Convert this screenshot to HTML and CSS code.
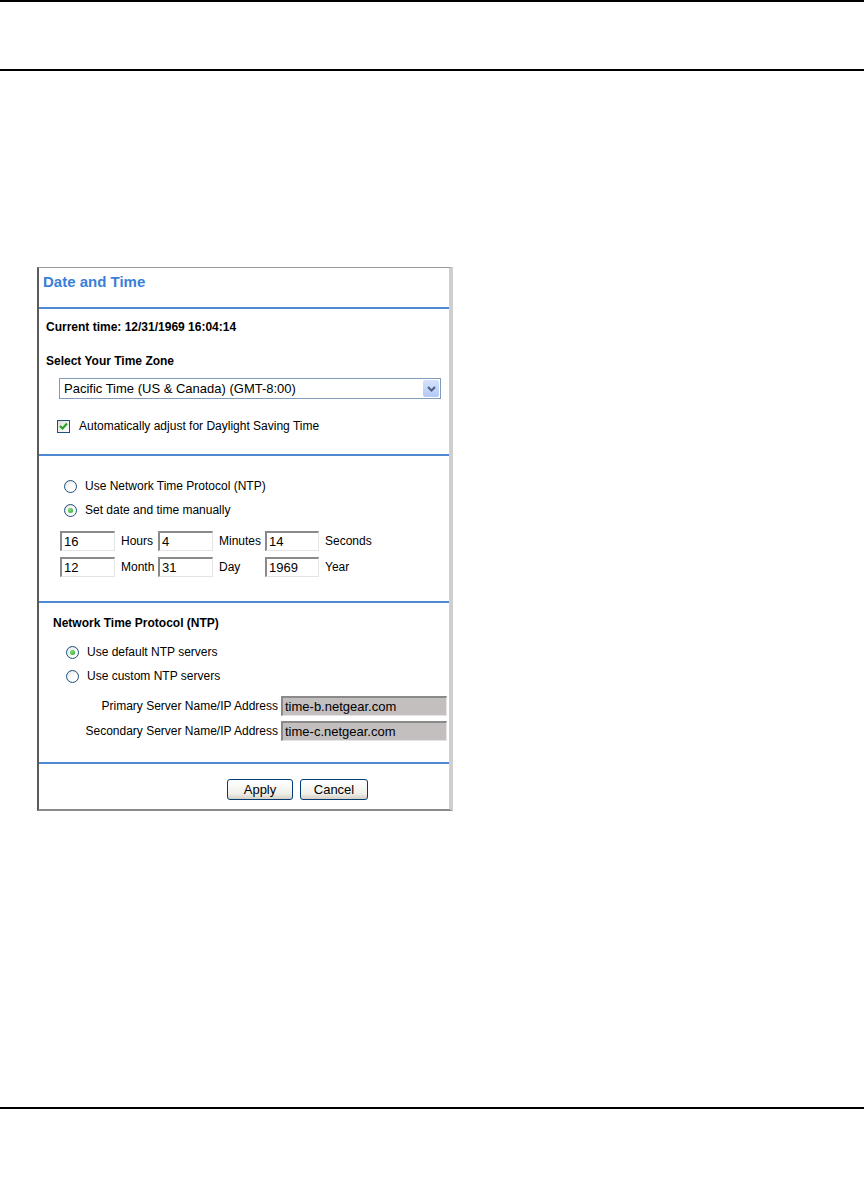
FILE: index.html
```html
<!DOCTYPE html>
<html>
<head>
<meta charset="utf-8">
<link rel="stylesheet" href="styles.css">
</head>
<body>
<div class="page-header"></div>
<div class="content">
  <div class="panel">
    <div class="title">Date and Time</div>
    <div class="sec sec1">
      <div class="bold-line">Current time: 12/31/1969 16:04:14</div>
      <div class="bold-line tz-label">Select Your Time Zone</div>
      <div class="select">
        <span class="select-text">Pacific Time (US &amp; Canada) (GMT-8:00)</span>
        <span class="select-btn">
          <svg width="9" height="6" viewBox="0 0 9 6"><path d="M1 1 L4.5 4.5 L8 1" fill="none" stroke="#4d6185" stroke-width="2"/></svg>
        </span>
      </div>
      <div class="check-row">
        <span class="checkbox">
          <svg width="9" height="8" viewBox="0 0 9 8"><path d="M1 4 L3.5 6.5 L8 1.5" fill="none" stroke="#21a121" stroke-width="2"/></svg>
        </span>
        <span>Automatically adjust for Daylight Saving Time</span>
      </div>
    </div>
    <div class="sec sec2">
      <div class="radio-row"><span class="radio"></span><span>Use Network Time Protocol (NTP)</span></div>
      <div class="radio-row"><span class="radio on"></span><span>Set date and time manually</span></div>
      <div class="time-grid">
        <span class="field">16</span><span class="lbl">Hours</span>
        <span class="field">4</span><span class="lbl">Minutes</span>
        <span class="field">14</span><span class="lbl">Seconds</span>
        <span class="field">12</span><span class="lbl">Month</span>
        <span class="field">31</span><span class="lbl">Day</span>
        <span class="field">1969</span><span class="lbl">Year</span>
      </div>
    </div>
    <div class="sec sec3">
      <div class="bold-line ntp-title">Network Time Protocol (NTP)</div>
      <div class="radio-row r3"><span class="radio on"></span><span>Use default NTP servers</span></div>
      <div class="radio-row r3"><span class="radio"></span><span>Use custom NTP servers</span></div>
      <div class="server-grid">
        <span class="srv-lbl">Primary Server Name/IP Address</span><span class="field gray">time-b.netgear.com</span>
        <span class="srv-lbl">Secondary Server Name/IP Address</span><span class="field gray">time-c.netgear.com</span>
      </div>
    </div>
    <div class="buttons">
      <span class="btn apply">Apply</span>
      <span class="btn cancel">Cancel</span>
    </div>
  </div>
</div>
<div class="page-footer"></div>
</body>
</html>
```
FILE: styles.css
```css
html, body {
  margin: 0;
  padding: 0;
  background: #ffffff;
}
body {
  font-family: "Liberation Sans", Arial, sans-serif;
  font-size: 12px;
  color: #000;
  width: 864px;
  height: 1184px;
}
.page-header {
  height: 67px;
  border-top: 2px solid #000;
  border-bottom: 2px solid #000;
}
.content {
  padding-top: 196px;
  padding-left: 37px;
  height: 1036px;
  box-sizing: border-box;
}
.page-footer {
  border-top: 2px solid #000;
}
.panel {
  width: 416px;
  height: 544px;
  box-sizing: border-box;
  border-left: 2px solid #5a5a5a;
  border-top: 1px solid #9a9a9a;
  border-right: 4px solid #cfcfcf;
  border-bottom: 2px solid #8a8a8a;
  display: flex;
  flex-direction: column;
}
.title {
  height: 41px;
  flex: none;
  box-sizing: border-box;
  padding: 5px 0 0 4px;
  font-size: 15px;
  font-weight: bold;
  line-height: 18px;
  color: #3a7fd8;
  border-bottom: 2px solid #4f88d3;
}
.sec {
  flex: none;
  box-sizing: border-box;
  border-bottom: 2px solid #4f88d3;
}
.sec1 {
  height: 147px;
  padding: 10px 0 0 7px;
}
.bold-line {
  font-weight: bold;
  line-height: 16px;
}
.tz-label {
  margin-top: 18px;
}
.select {
  margin: 9px 0 0 13px;
  width: 382px;
  height: 21px;
  box-sizing: border-box;
  border: 1px solid #7f9db9;
  display: flex;
  align-items: center;
  justify-content: space-between;
  padding-left: 4px;
  font-size: 13px;
}
.select-btn {
  width: 16px;
  height: 17px;
  margin-right: 1px;
  background: linear-gradient(#d6e2fd, #b4c8f6);
  border-radius: 2px;
  display: flex;
  align-items: center;
  justify-content: center;
}
.check-row {
  margin: 19px 0 0 11px;
  display: flex;
  align-items: center;
  line-height: 16px;
}
.checkbox {
  width: 13px;
  height: 13px;
  box-sizing: border-box;
  border: 1px solid #1c5180;
  background: linear-gradient(135deg, #dcdcd7, #ffffff);
  margin-right: 9px;
  display: flex;
  align-items: center;
  justify-content: center;
}
.sec2 {
  height: 147px;
  padding: 22px 0 0 25px;
}
.radio-row {
  display: flex;
  align-items: center;
  line-height: 16px;
  height: 16px;
  margin-bottom: 8px;
}
.radio {
  width: 13px;
  height: 13px;
  box-sizing: border-box;
  border-radius: 50%;
  border: 1px solid #1c5180;
  background: radial-gradient(circle at 65% 65%, #ffffff 30%, #dcdcd7 100%);
  margin-right: 8px;
  position: relative;
}
.radio.on::after {
  content: "";
  position: absolute;
  left: 3px;
  top: 3px;
  width: 5px;
  height: 5px;
  border-radius: 50%;
  background: radial-gradient(circle at 40% 40%, #7fe07f, #21a121);
}
.time-grid {
  margin: 13px 0 0 -4px;
  display: grid;
  grid-template-columns: 55px 43px 55px 52px 54px auto;
  grid-auto-rows: 20px;
  row-gap: 6px;
  align-items: center;
}
.field {
  height: 20px;
  box-sizing: border-box;
  border-top: 2px solid #8a8a8a;
  border-left: 2px solid #8a8a8a;
  border-right: 1px solid #e4e4e4;
  border-bottom: 1px solid #e4e4e4;
  padding-left: 2px;
  line-height: 17px;
  font-size: 13px;
  background: #fff;
}
.lbl {
  padding-left: 6px;
}
.sec3 {
  height: 161px;
  padding: 12px 0 0 14px;
}
.ntp-title {
  margin-bottom: 13px;
}
.r3 {
  padding-left: 13px;
}
.server-grid {
  margin: 12px 0 0 -14px;
  display: grid;
  grid-template-columns: 239px 166px;
  column-gap: 3px;
  grid-auto-rows: 20px;
  row-gap: 5px;
  align-items: center;
}
.srv-lbl {
  text-align: right;
}
.field.gray {
  background: #c3bfbf;
  font-size: 13px;
}
.buttons {
  display: flex;
  gap: 7px;
  padding: 15px 0 0 188px;
}
.btn {
  height: 21px;
  box-sizing: border-box;
  border: 1px solid #003c74;
  border-radius: 3px;
  background: linear-gradient(#ffffff, #f0f0ea 70%, #d6d0c5);
  font-size: 13px;
  line-height: 19px;
  text-align: center;
}
.apply { width: 66px; }
.cancel { width: 68px; }
```
